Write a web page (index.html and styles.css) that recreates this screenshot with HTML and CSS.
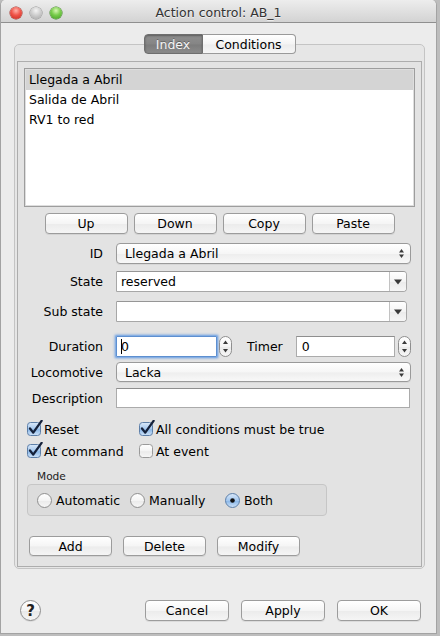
FILE: index.html
```html
<!DOCTYPE html>
<html lang="en">
<head>
<meta charset="utf-8">
<title>Action control: AB_1</title>
<link rel="stylesheet" href="styles.css">
</head>
<body>
<svg class="defs" width="0" height="0" aria-hidden="true">
  <defs>
    <linearGradient id="gBlue" x1="0" y1="0" x2="0" y2="1">
      <stop offset="0" stop-color="#dbe9f9"/>
      <stop offset="0.5" stop-color="#a3c7ee"/>
      <stop offset="0.55" stop-color="#8cb8e8"/>
      <stop offset="1" stop-color="#cfe3f8"/>
    </linearGradient>
    <linearGradient id="gWhite" x1="0" y1="0" x2="0" y2="1">
      <stop offset="0" stop-color="#ffffff"/>
      <stop offset="0.5" stop-color="#f4f4f4"/>
      <stop offset="0.55" stop-color="#ebebeb"/>
      <stop offset="1" stop-color="#f7f7f7"/>
    </linearGradient>
  </defs>
</svg>
<div class="window">
  <header class="titlebar">
    <div class="lights">
      <span class="light red"></span>
      <span class="light grey"></span>
      <span class="light green"></span>
    </div>
    <div class="title">Action control: AB_1</div>
    <div></div>
  </header>

  <nav class="tabs">
    <span class="tab active">Index</span>
    <span class="tab">Conditions</span>
  </nav>

  <section class="pane">
    <div class="panel">
      <div class="list">
        <div class="item selected">Llegada a Abril</div>
        <div class="item">Salida de Abril</div>
        <div class="item">RV1 to red</div>
      </div>

      <div class="btnrow listbtns">
        <span class="btn">Up</span>
        <span class="btn">Down</span>
        <span class="btn">Copy</span>
        <span class="btn">Paste</span>
      </div>

      <div class="row r-id">
        <span class="lbl">ID</span>
        <div class="popup">
          <span>Llegada a Abril</span>
          <svg class="updown" width="7" height="11" viewBox="0 0 7 11"><polygon points="3.5,1 1,4.5 6,4.5" fill="#3a3a3a"/><polygon points="1,6.5 6,6.5 3.5,10" fill="#3a3a3a"/></svg>
        </div>
      </div>

      <div class="row r-state">
        <span class="lbl">State</span>
        <div class="combo">
          <span class="combo-text">reserved</span>
          <span class="combo-btn"><svg width="8" height="6" viewBox="0 0 8 6"><polygon points="0,0.5 8,0.5 4,5.5" fill="#3a3a3a"/></svg></span>
        </div>
      </div>

      <div class="row r-sub">
        <span class="lbl">Sub state</span>
        <div class="combo">
          <span class="combo-text"></span>
          <span class="combo-btn"><svg width="8" height="6" viewBox="0 0 8 6"><polygon points="0,0.5 8,0.5 4,5.5" fill="#3a3a3a"/></svg></span>
        </div>
      </div>

      <div class="row r-dur">
        <span class="lbl">Duration</span>
        <div class="field dur focus"><span class="caret"></span><span class="val">0</span></div>
        <svg class="spinner" width="13" height="21" viewBox="0 0 13 21"><rect x="0.5" y="0.5" width="12" height="20" rx="6" fill="url(#gWhite)" stroke="#8e8e8e"/><polygon points="6.5,4.5 4,8 9,8" fill="#3a3a3a"/><polygon points="4,13 9,13 6.5,16.5" fill="#3a3a3a"/></svg>
        <span class="lbl2">Timer</span>
        <div class="field timer"><span class="val">0</span></div>
        <svg class="spinner" width="13" height="21" viewBox="0 0 13 21"><rect x="0.5" y="0.5" width="12" height="20" rx="6" fill="url(#gWhite)" stroke="#8e8e8e"/><polygon points="6.5,4.5 4,8 9,8" fill="#3a3a3a"/><polygon points="4,13 9,13 6.5,16.5" fill="#3a3a3a"/></svg>
      </div>

      <div class="row r-loco">
        <span class="lbl">Locomotive</span>
        <div class="popup">
          <span>Lacka</span>
          <svg class="updown" width="7" height="11" viewBox="0 0 7 11"><polygon points="3.5,1 1,4.5 6,4.5" fill="#3a3a3a"/><polygon points="1,6.5 6,6.5 3.5,10" fill="#3a3a3a"/></svg>
        </div>
      </div>

      <div class="row r-desc">
        <span class="lbl">Description</span>
        <div class="field desc"></div>
      </div>

      <div class="checks r-chk1">
        <label class="chk c1"><svg width="16" height="16" viewBox="0 0 16 16"><rect x="0.5" y="2.5" width="13" height="13" rx="3" fill="url(#gBlue)" stroke="#5d7fa8"/><path d="M3 8.5 L6.2 12.6 L14.6 0.8" fill="none" stroke="#15213a" stroke-width="2.3" stroke-linecap="round" stroke-linejoin="round"/></svg><span>Reset</span></label>
        <label class="chk"><svg width="16" height="16" viewBox="0 0 16 16"><rect x="0.5" y="2.5" width="13" height="13" rx="3" fill="url(#gBlue)" stroke="#5d7fa8"/><path d="M3 8.5 L6.2 12.6 L14.6 0.8" fill="none" stroke="#15213a" stroke-width="2.3" stroke-linecap="round" stroke-linejoin="round"/></svg><span>All conditions must be true</span></label>
      </div>
      <div class="checks r-chk2">
        <label class="chk c1"><svg width="16" height="16" viewBox="0 0 16 16"><rect x="0.5" y="2.5" width="13" height="13" rx="3" fill="url(#gBlue)" stroke="#5d7fa8"/><path d="M3 8.5 L6.2 12.6 L14.6 0.8" fill="none" stroke="#15213a" stroke-width="2.3" stroke-linecap="round" stroke-linejoin="round"/></svg><span>At command</span></label>
        <label class="chk"><svg width="16" height="16" viewBox="0 0 16 16"><rect x="0.5" y="2.5" width="13" height="13" rx="3" fill="url(#gWhite)" stroke="#9a9a9a"/></svg><span>At event</span></label>
      </div>

      <div class="modelbl">Mode</div>
      <div class="group">
        <label class="radio r-auto"><svg width="15" height="15" viewBox="0 0 15 15"><circle cx="7.5" cy="7.5" r="7" fill="url(#gWhite)" stroke="#8e8e8e"/></svg><span>Automatic</span></label>
        <label class="radio r-man"><svg width="15" height="15" viewBox="0 0 15 15"><circle cx="7.5" cy="7.5" r="7" fill="url(#gWhite)" stroke="#8e8e8e"/></svg><span>Manually</span></label>
        <label class="radio"><svg width="15" height="15" viewBox="0 0 15 15"><circle cx="7.5" cy="7.5" r="7" fill="url(#gBlue)" stroke="#5d7fa8"/><circle cx="7.5" cy="7.5" r="2.3" fill="#111"/></svg><span>Both</span></label>
      </div>

      <div class="btnrow editbtns">
        <span class="btn">Add</span>
        <span class="btn">Delete</span>
        <span class="btn">Modify</span>
      </div>
    </div>
  </section>

  <footer class="footer">
    <span class="help">?</span>
    <div class="actions">
      <span class="btn">Cancel</span>
      <span class="btn">Apply</span>
      <span class="btn">OK</span>
    </div>
  </footer>
</div>
</body>
</html>
```

FILE: styles.css
```css
* { box-sizing: border-box; }
html, body { margin: 0; padding: 0; }
body {
  width: 440px;
  height: 636px;
  overflow: hidden;
  background: #bdbdbd;
  font-family: "DejaVu Sans", "Noto Sans", sans-serif;
  font-size: 12.5px;
  color: #000;
}
.defs { display: block; width: 0; height: 0; overflow: hidden; }

.window {
  width: 437px;
  height: 634px;
  background: #ececec;
  border: 1px solid #a3a3a3;
  border-top: none;
  border-radius: 5px 5px 0 0;
  display: flex;
  flex-direction: column;
  overflow: hidden;
}

/* title bar */
.titlebar {
  height: 23px;
  padding-top: 3px;
  border-bottom: 1px solid #8f8f8f;
  background: linear-gradient(#ededed, #d3d3d3);
  display: grid;
  grid-template-columns: 1fr auto 1fr;
  align-items: center;
  border-radius: 5px 5px 0 0;
}
.lights { display: flex; gap: 8px; padding-left: 9px; }
.light {
  width: 12px; height: 12px; border-radius: 50%;
  display: block;
}
.light.red { background: radial-gradient(circle at 50% 30%, #ffb3aa 0, #f0554a 45%, #c3281e 100%); box-shadow: 0 0 0 0.5px #9d2a22; }
.light.grey { background: radial-gradient(circle at 50% 30%, #f4f4f4 0, #cfcfcf 45%, #a4a4a4 100%); box-shadow: 0 0 0 0.5px #8a8a8a; }
.light.green { background: radial-gradient(circle at 50% 30%, #d8f7b4 0, #78cc4b 45%, #3f9a22 100%); box-shadow: 0 0 0 0.5px #3b7d22; }
.title {
  color: #333;
  text-shadow: 0 1px 0 rgba(255,255,255,0.6);
  font-size: 12.5px;
}

/* tabs */
.tabs {
  margin: 11px 11px 0 13px;
  height: 20px;
  display: flex;
  justify-content: center;
  position: relative;
  z-index: 1;
}
.tab {
  height: 20px;
  display: flex;
  align-items: center;
  justify-content: center;
  border: 1px solid #9a9a9a;
  background: linear-gradient(#ffffff, #f4f4f4 50%, #ececec 55%, #f6f6f6);
  color: #000;
}
.tab.active {
  width: 59px;
  border-color: #6e6e6e;
  border-radius: 4px 0 0 4px;
  background: linear-gradient(#8f8f8f, #858585 50%, #7c7c7c 55%, #8a8a8a);
  box-shadow: inset 0 1px 2px rgba(0,0,0,0.35);
  color: #f4f4f4;
  text-shadow: 0 -1px 0 rgba(0,0,0,0.3);
}
.tab:not(.active) {
  width: 93px;
  border-left: none;
  border-radius: 0 4px 4px 0;
}

/* pane */
.pane {
  margin: -10px 11px 0 13px;
  border: 1px solid #c4c4c4;
  border-radius: 5px;
  background: #e6e6e6;
  padding: 16px 2px 1px 2px;
}
.panel {
  border: 1px solid #adadad;
  background: #e3e3e3;
  padding: 6px 7px 10px 6px;
  display: flex;
  flex-direction: column;
}

.list {
  width: 391px;
  height: 139px;
  background: #fff;
  border: 1px solid #9d9d9d;
  box-shadow: inset 0 0 0 1px #dedede;
  padding: 1px 1px;
}
.item {
  height: 20px;
  line-height: 20px;
  padding-left: 3px;
}
.item.selected { background: #d4d4d4; }

/* buttons */
.btnrow { display: flex; }
.btn {
  height: 21px;
  width: 83px;
  border: 1px solid #9c9c9c;
  border-radius: 4px;
  background: linear-gradient(#ffffff, #f5f5f5 50%, #ececec 55%, #f5f5f5);
  box-shadow: 0 1px 0 rgba(0,0,0,0.07);
  display: flex;
  align-items: center;
  justify-content: center;
}
.listbtns { margin-top: 6px; gap: 6px; justify-content: center; width: 391px; }
.editbtns { margin-top: 20px; margin-left: 5px; gap: 11px; }
.editbtns .btn { height: 20px; }

/* form rows */
.row { display: flex; align-items: center; height: 21px; }
.lbl { width: 79px; text-align: right; margin-right: 13px; }
.r-id { margin-top: 9px; }
.r-state { margin-top: 7px; }
.r-sub { margin-top: 9px; }
.r-dur { margin-top: 14px; }
.r-loco { margin-top: 5px; height: 20px; }
.r-desc { margin-top: 6px; height: 20px; }

.popup {
  width: 295px;
  height: 100%;
  border: 1px solid #9a9a9a;
  border-radius: 4px;
  background: linear-gradient(#ffffff, #f6f6f6 50%, #eeeeee 55%, #f8f8f8);
  box-shadow: 0 1px 0 rgba(0,0,0,0.05);
  display: flex;
  align-items: center;
  justify-content: space-between;
  padding: 0 5px 0 8px;
}
.combo {
  width: 291px;
  height: 21px;
  border: 1px solid #a7a7a7;
  border-top-color: #969696;
  border-radius: 1px 4px 4px 1px;
  background: #fff;
  display: flex;
}
.combo-text { flex: 1; padding-left: 4px; display: flex; align-items: center; }
.combo-btn {
  width: 17px;
  border-left: 1px solid #c2c2c2;
  border-radius: 0 3px 3px 0;
  background: linear-gradient(#ffffff, #f4f4f4 50%, #ececec 55%, #f6f6f6);
  display: flex;
  align-items: center;
  justify-content: center;
}

.field {
  height: 21px;
  background: #fff;
  border: 1px solid #ababab;
  border-top-color: #8e8e8e;
  display: flex;
  align-items: center;
  padding-left: 5px;
}
.field.dur { width: 101px; padding-left: 4px; }
.field.focus {
  border-color: #5d8fd0;
  box-shadow: 0 0 0 1px #86afe3, 0 0 2px 2px rgba(110,160,225,0.55);
  border-radius: 1px;
}
.caret { width: 1px; height: 15px; background: #000; display: block; }
.field.dur .val { margin-left: -1px; }
.field.timer { width: 99px; }
.field.desc { width: 294px; height: 20px; }
.spinner { display: block; margin-left: 2px; flex: none; }
.field.timer + .spinner { margin-left: 3px; }
.lbl2 { margin-left: 15px; margin-right: 13px; }

/* checkboxes */
.checks { display: flex; align-items: center; height: 18px; padding-left: 3px; }
.r-chk1 { margin-top: 12px; }
.r-chk2 { margin-top: 4px; }
.chk { display: flex; align-items: center; }
.chk svg { display: block; flex: none; margin-top: -2px; }
.chk span { margin-left: 1px; }
.chk.c1 { width: 112px; }

/* mode group */
.modelbl { margin-top: 10px; margin-left: 13px; font-size: 10.6px; color: #222; height: 13px; line-height: 13px; }
.group {
  margin-top: 1px;
  margin-left: 3px;
  width: 300px;
  height: 32px;
  border: 1px solid #c6c6c6;
  border-radius: 4px;
  background: #dcdcdc;
  display: flex;
  align-items: center;
  padding-left: 9px;
}
.radio { display: flex; align-items: center; }
.radio svg { display: block; flex: none; }
.radio span { margin-left: 4px; }
.r-auto { width: 93px; }
.r-man { width: 95px; }

/* footer */
.footer {
  margin-top: 31px;
  display: flex;
  align-items: center;
  padding: 0 15px 0 19px;
}
.help {
  width: 21px;
  height: 21px;
  border-radius: 50%;
  border: 1px solid #8e8e8e;
  background: linear-gradient(#ffffff, #f3f3f3 50%, #e9e9e9 55%, #f5f5f5);
  box-shadow: 0 1px 0 rgba(0,0,0,0.08);
  display: flex;
  align-items: center;
  justify-content: center;
  font-weight: bold;
  font-size: 15px;
  color: #222;
}
.actions { margin-left: auto; display: flex; gap: 12px; }
.actions .btn { width: 84px; }
```
